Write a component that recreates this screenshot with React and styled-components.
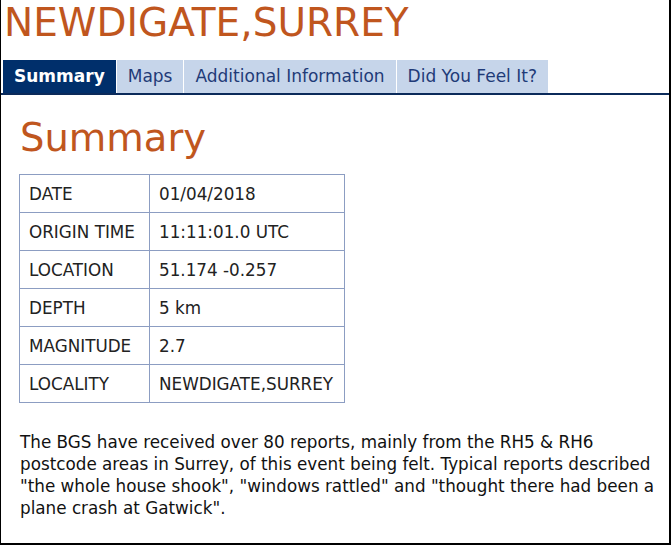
import styled, { createGlobalStyle } from "styled-components";

const GlobalStyle = createGlobalStyle`
    html, body {
        margin: 0;
        padding: 0;
        background: #ffffff;
    }
`;

const rows = [
    ["DATE", "01/04/2018"],
    ["ORIGIN TIME", "11:11:01.0 UTC"],
    ["LOCATION", "51.174 -0.257"],
    ["DEPTH", "5 km"],
    ["MAGNITUDE", "2.7"],
    ["LOCALITY", "NEWDIGATE,SURREY"],
];

const tabs = ["Summary", "Maps", "Additional Information", "Did You Feel It?"];

const App = () => {
    return (
        <>
            <GlobalStyle />
            <Page>
                <Title>NEWDIGATE,SURREY</Title>
                <TabBar>
                    {tabs.map((t, i) => (
                        <Tab key={t} active={i === 0}>{t}</Tab>
                    ))}
                </TabBar>
                <Content>
                    <Heading>Summary</Heading>
                    <Table>
                        <tbody>
                            {rows.map(([k, v]) => (
                                <tr key={k}>
                                    <Cell label>{k}</Cell>
                                    <Cell>{v}</Cell>
                                </tr>
                            ))}
                        </tbody>
                    </Table>
                    <Text>
                        The BGS have received over 80 reports, mainly from the RH5 &amp; RH6<br />
                        postcode areas in Surrey, of this event being felt. Typical reports described<br />
                        "the whole house shook", "windows rattled" and "thought there had been a<br />
                        plane crash at Gatwick".
                    </Text>
                </Content>
            </Page>
        </>
    );
};

export default App;

const Page = styled.div`
    box-sizing: border-box;
    width: 671px;
    height: 545px;
    border-left: 1px solid #000;
    border-right: 2px solid #000;
    border-bottom: 2px solid #000;
    overflow: hidden;
    font-family: "DejaVu Sans", sans-serif;
`;

const Title = styled.h1`
    margin: 0;
    padding: 0 0 0 3px;
    height: 60px;
    line-height: 46px;
    font-size: 39px;
    font-weight: normal;
    color: #c0561e;
`;

const TabBar = styled.div`
    display: flex;
    padding-left: 2px;
    border-bottom: 2px solid #0b2a5a;
`;

const Tab = styled.div`
    height: 33px;
    line-height: 33px;
    padding: 0 11px;
    margin-right: 1px;
    font-size: 17px;
    font-weight: ${p => (p.active ? "bold" : "normal")};
    color: ${p => (p.active ? "#ffffff" : "#1f3b78")};
    background: ${p => (p.active ? "#002f6b" : "#c6d5ea")};
`;

const Content = styled.div`
    padding: 0 18px;
`;

const Heading = styled.h2`
    margin: 0;
    padding: 20px 0 0 1px;
    height: 59px;
    line-height: 46px;
    font-size: 38.5px;
    font-weight: normal;
    color: #c0561e;
`;

const Table = styled.table`
    border-collapse: collapse;
    width: 326px;
    font-size: 16.8px;
    color: #222;
`;

const Cell = styled.td`
    border: 1px solid #8c9dc2;
    height: 37px;
    padding: 0 8px 0 9px;
    white-space: nowrap;
    width: ${p => (p.label ? "112px" : "auto")};
`;

const Text = styled.p`
    margin: 28px 0 0 1px;
    font-size: 16.8px;
    line-height: 22px;
    color: #111;
    white-space: nowrap;
`;
